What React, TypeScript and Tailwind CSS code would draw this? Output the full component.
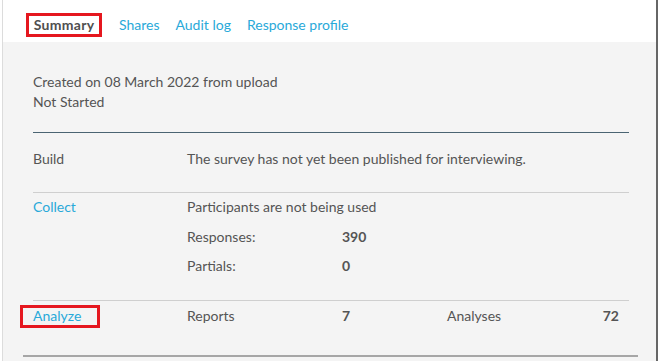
const tabs = ['Shares', 'Audit log', 'Response profile']

const App = () => {
  return (
    <div className="w-[658px] h-[361px] bg-white overflow-hidden font-['Lato',_'Liberation_Sans',_sans-serif] text-[14px] leading-5 text-[#555]">
      <div className="ml-[2px] w-[656px] h-full flex flex-col border-l border-[#dcdcdc] border-r-2 border-r-[#666]">
        {/* tabs */}
        <div className="h-[42px] shrink-0 flex items-end pl-[20px] bg-white">
          <div className="h-[33px] w-[82px] bg-white rounded-t flex items-start justify-center pt-[4px]">
            <span className="border-[3px] border-[#e5171f] px-[3px] w-[76px] justify-center h-[24px] flex items-center font-bold text-[#4f4f4f] tracking-[0.3px]">
              Summary
            </span>
          </div>
          <div className="flex gap-[16px] h-[33px] items-center pb-[1px] ml-[14px] text-[#29a9d9]">
            {tabs.map((t) => (
              <span key={t}>{t}</span>
            ))}
          </div>
        </div>

        {/* body */}
        <div className="flex-1 bg-[#f4f4f4] pl-[30px] pr-[27px] pt-[30px]">
          <p>Created on 08 March 2022 from upload</p>
          <p>Not Started</p>
          <div className="mt-[20px] h-px bg-[#4a6472]" />

          <div className="flex pt-[16px] pb-[23px] border-b border-[#cfcfcf]">
            <span className="w-[154px]">Build</span>
            <span>The survey has not yet been published for interviewing.</span>
          </div>

          <div className="flex pt-[4px] pb-[24px] border-b border-[#cfcfcf]">
            <span className="w-[154px] text-[#29a9d9]">Collect</span>
            <div className="flex flex-col gap-[9.5px]">
              <span>Participants are not being used</span>
              <div className="flex">
                <span className="w-[155px]">Responses:</span>
                <span className="font-bold">390</span>
              </div>
              <div className="flex">
                <span className="w-[155px]">Partials:</span>
                <span className="font-bold">0</span>
              </div>
            </div>
          </div>

          <div className="flex pt-[5px] pr-[10px]">
            <span className="relative w-[154px] text-[#29a9d9]">
              Analyze
              <span className="absolute left-[-13px] top-[-1px] w-[80px] h-[23px] border-[3px] border-[#e5171f]" />
            </span>
            <span className="w-[155px]">Reports</span>
            <span className="w-[105px] font-bold">7</span>
            <span className="flex-1">Analyses</span>
            <span className="font-bold">72</span>
          </div>
          <div className="mt-[29px] ml-[-10px] mr-[-9px] h-[2px] bg-[#a6a6a6]" />
        </div>
      </div>
    </div>
  )
}

export default App
